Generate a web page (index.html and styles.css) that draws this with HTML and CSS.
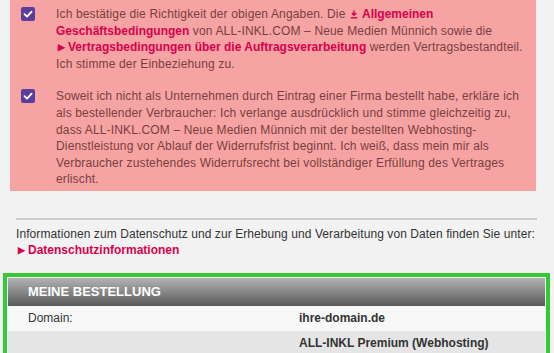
FILE: index.html
```html
<!DOCTYPE html>
<html lang="de">
<head>
  <meta charset="UTF-8" />
  <title>Bestellung</title>
  <link rel="stylesheet" href="styles.css">
</head>
<body>
  <!-- Zustimmungen -->
  <div class="consent">
    <div class="check-row">
      <span class="checkbox">
        <svg viewBox="0 0 14 14" width="14" height="14"><path d="M3.5 7.2 L6 9.6 L10.6 4.6" fill="none" stroke="#fff" stroke-width="1.8" stroke-linecap="round" stroke-linejoin="round"/></svg>
      </span>
      <p>
        Ich bestätige die Richtigkeit der obigen Angaben. Die
        <a href="#" class="link"><svg class="dl-icon" viewBox="0 0 8 9" width="8" height="9"><path d="M4 0.5 V5 M1.8 3 L4 5.3 L6.2 3" fill="none" stroke="currentColor" stroke-width="1.4"/><path d="M0.8 7.8 H7.2" stroke="currentColor" stroke-width="1.4"/></svg>Allgemeinen Geschäftsbedingungen</a>
        von ALL-INKL.COM – Neue Medien Münnich sowie die
        <a href="#" class="link arrow">Vertragsbedingungen über die Auftragsverarbeitung</a>
        werden Vertragsbestandteil. Ich stimme der Einbeziehung zu.
      </p>
    </div>
    <div class="check-row">
      <span class="checkbox">
        <svg viewBox="0 0 14 14" width="14" height="14"><path d="M3.5 7.2 L6 9.6 L10.6 4.6" fill="none" stroke="#fff" stroke-width="1.8" stroke-linecap="round" stroke-linejoin="round"/></svg>
      </span>
      <p>
        Soweit ich nicht als Unternehmen durch Eintrag einer Firma bestellt habe, erkläre ich
        als bestellender Verbraucher: Ich verlange ausdrücklich und stimme gleichzeitig zu,
        dass ALL-INKL.COM – Neue Medien Münnich mit der bestellten Webhosting-Dienstleistung
        vor Ablauf der Widerrufsfrist beginnt. Ich weiß, dass mein mir als Verbraucher
        zustehendes Widerrufsrecht bei vollständiger Erfüllung des Vertrages erlischt.
      </p>
    </div>
  </div>

  <!-- Datenschutz -->
  <div class="privacy">
    <p>Informationen zum Datenschutz und zur Erhebung und Verarbeitung von Daten finden Sie unter:</p>
    <a href="#" class="link arrow">Datenschutzinformationen</a>
  </div>

  <!-- Bestellübersicht -->
  <div class="order">
    <div class="order-head">MEINE BESTELLUNG</div>
    <div class="order-row">
      <span>Domain:</span>
      <strong>ihre-domain.de</strong>
    </div>
    <div class="order-row alt">
      <span></span>
      <strong>ALL-INKL Premium (Webhosting)</strong>
    </div>
  </div>
</body>
</html>
```

FILE: styles.css
```css
* {
  margin: 0;
  padding: 0;
  box-sizing: border-box;
}
body {
  background: #f2f2f2;
  font-family: "Liberation Sans", Arial, sans-serif;
  font-size: 12px;
  color: #333;
  overflow: hidden;
}
.link {
  color: #d9004c;
  font-weight: bold;
  text-decoration: none;
  letter-spacing: 0;
}
/* triangle as a glyph so it never wraps away from the link text */
.arrow::before {
  content: "\25B6";
  font-size: 8.5px;
  margin: 0 3px 0 2px;
  vertical-align: 1px;
}
.dl-icon {
  margin: 0 4px 0 1px;
  vertical-align: -1px;
}

/* Zustimmungen */
.consent {
  background: #f5a3a3;
  margin: 0 18px 0 10px;
  padding: 6px 6px 3px 11px;
}
.check-row {
  display: flex;
  gap: 21px;
  line-height: 16.6px;
  letter-spacing: 0.15px;
  color: #7a3f40;
}
.check-row + .check-row {
  margin-top: 16px;
}
.check-row p {
  flex: 1;
}
.checkbox {
  flex: none;
  width: 14px;
  height: 14px;
  margin-top: 1px;
  border-radius: 2px;
  background: #5c3d9b;
  display: flex;
}

/* Datenschutz */
.privacy {
  margin: 27px 17px 0 16px;
  border-top: 2px solid #cccccc;
  padding-top: 6px;
  line-height: 16px;
  letter-spacing: 0.08px;
}

/* Bestellübersicht */
.order {
  margin: 15px 4px 0 3px;
  border: 4px solid #36c936;
  border-bottom: 0;
  padding: 1px 1px 0 1px;
}
.order-head {
  height: 28px;
  line-height: 28px;
  padding-left: 20px;
  color: #fff;
  font-size: 13px;
  font-weight: bold;
  background: linear-gradient(#b3b3b3, #5a5a5a);
}
.order-row {
  display: grid;
  grid-template-columns: 271px 1fr;
  height: 25px;
  line-height: 25px;
  padding-left: 20px;
  background: #f8f8f8;
}
.order-row.alt {
  background: #e5e5e5;
}
.order-row strong {
  color: #333;
}
```
